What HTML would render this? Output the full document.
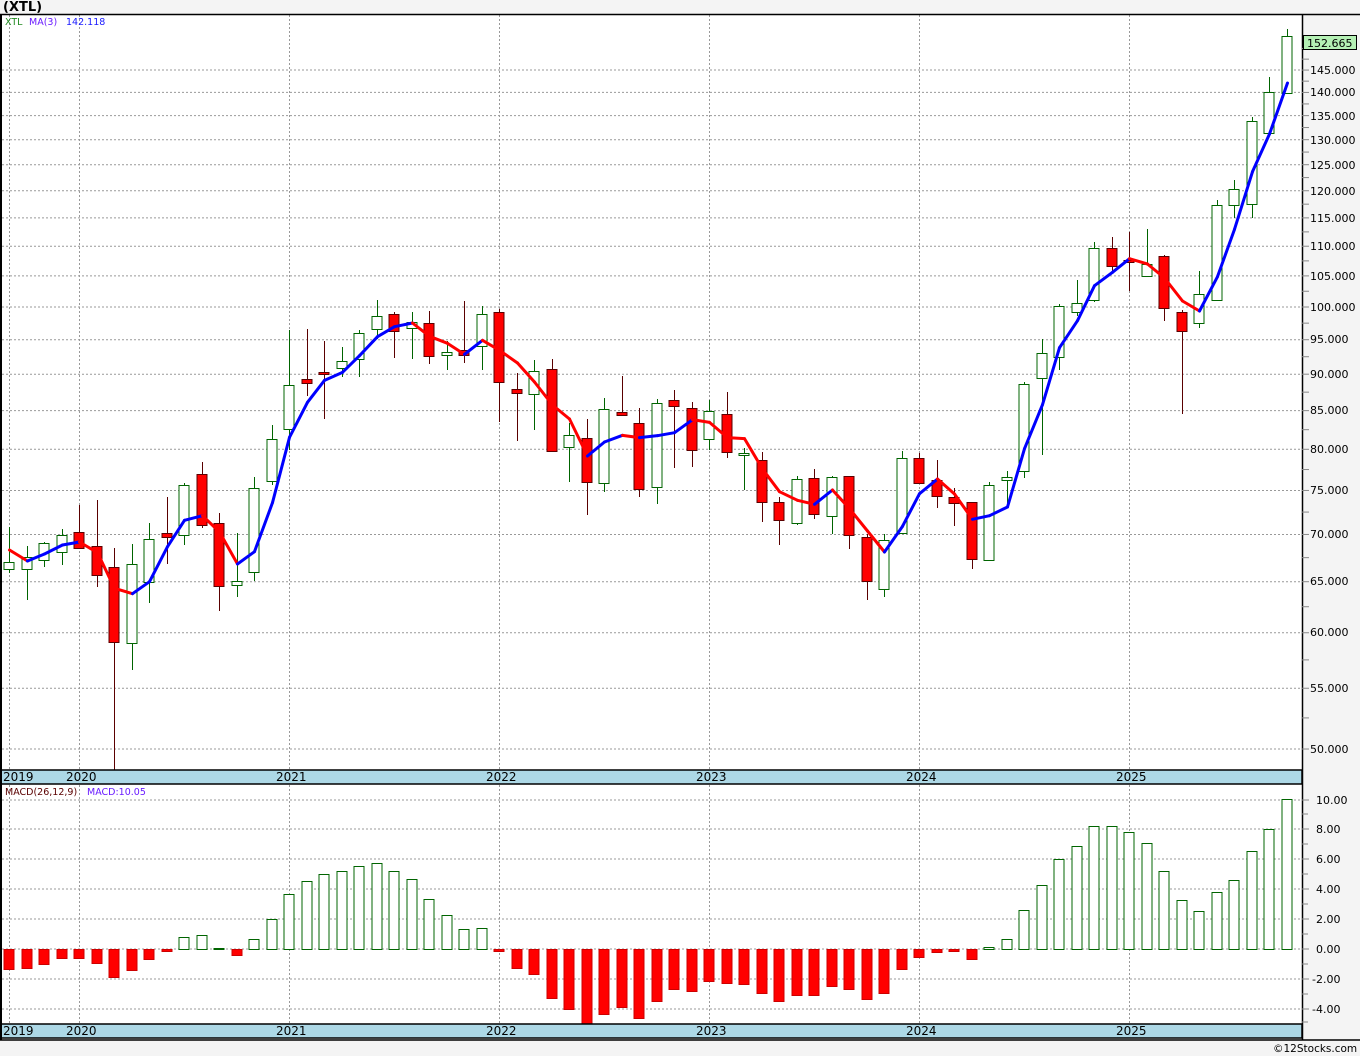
<!DOCTYPE html>
<html><head><meta charset="utf-8"><style>
html,body{margin:0;padding:0;background:#f4f4f4;}
svg{display:block;font-family:"DejaVu Sans","Liberation Sans",sans-serif;}
</style></head><body>
<svg id="s" width="1360" height="1056" viewBox="0 0 1360 1056" xmlns="http://www.w3.org/2000/svg">
<rect x="0" y="0" width="1360" height="1056" fill="#f4f4f4"/>
<rect x="1" y="14" width="1301" height="1026" fill="#fff"/>
<g id="grid"></g>
<g id="cand"></g>
<g id="ma"></g>
<g id="macd"></g>
<rect x="1" y="770" width="1301" height="14" fill="#add8e6" stroke="#000" stroke-width="1.5"/>
<rect x="1" y="1024" width="1301" height="14" fill="#add8e6" stroke="#000" stroke-width="1.5"/>
<g font-size="12" fill="#000">
<text x="3" y="781">2019</text><text x="66" y="781">2020</text><text x="276" y="781">2021</text><text x="486" y="781">2022</text><text x="696" y="781">2023</text><text x="906" y="781">2024</text><text x="1116" y="781">2025</text>
<text x="3" y="1035">2019</text><text x="66" y="1035">2020</text><text x="276" y="1035">2021</text><text x="486" y="1035">2022</text><text x="696" y="1035">2023</text><text x="906" y="1035">2024</text><text x="1116" y="1035">2025</text>
</g>
<line x1="1302.5" y1="14" x2="1302.5" y2="1040" stroke="#000" stroke-width="1.5"/>
<line x1="0" y1="14.5" x2="1360" y2="14.5" stroke="#000" stroke-width="1.5"/>
<line x1="1" y1="14" x2="1" y2="1040" stroke="#000" stroke-width="2"/>
<line x1="0" y1="1040" x2="1360" y2="1040" stroke="#000" stroke-width="1.5"/>
<g id="ticks"></g>
<g font-size="11" fill="#000">
<text x="1310" y="753">50.000</text><text x="1310" y="692">55.000</text><text x="1310" y="636">60.000</text><text x="1310" y="585">65.000</text><text x="1310" y="538">70.000</text><text x="1310" y="494">75.000</text><text x="1310" y="453">80.000</text><text x="1310" y="414">85.000</text><text x="1310" y="378">90.000</text><text x="1310" y="343">95.000</text><text x="1310" y="311">100.000</text><text x="1310" y="280">105.000</text><text x="1310" y="250">110.000</text><text x="1310" y="222">115.000</text><text x="1310" y="195">120.000</text><text x="1310" y="169">125.000</text><text x="1310" y="144">130.000</text><text x="1310" y="120">135.000</text><text x="1310" y="96">140.000</text><text x="1310" y="74">145.000</text>
<text x="1316" y="804">10.00</text><text x="1316" y="833">8.00</text><text x="1316" y="863">6.00</text><text x="1316" y="893">4.00</text><text x="1316" y="923">2.00</text><text x="1316" y="953">0.00</text><text x="1312" y="983">-2.00</text><text x="1312" y="1013">-4.00</text>
</g>
<rect x="1303.5" y="35.5" width="53" height="14" fill="#b4f0b4" stroke="#000"/>
<text x="1307" y="47" font-size="11" fill="#000">152.665</text>
<text x="3" y="11" font-size="13" font-weight="bold" fill="#000">(XTL)</text>
<text x="5" y="25" font-size="9.5" fill="#228b22">XTL</text>
<text x="29" y="25" font-size="9.5" fill="#6a1bff">MA(3)</text>
<text x="66" y="25" font-size="9.5" fill="#1a1aff">142.118</text>
<text x="5" y="795" font-size="9.5" fill="#5a0000">MACD(26,12,9)</text>
<text x="87" y="795" font-size="9.5" fill="#6a1bff">MACD:10.05</text>
<text x="1273" y="1052" font-size="10.5" fill="#000">©12Stocks.com</text>
</svg>
<script>
var NS="http://www.w3.org/2000/svg";
function el(p,t,a){var e=document.createElementNS(NS,t);for(var k in a)e.setAttribute(k,a[k]);p.appendChild(e);return e;}
var grid=document.getElementById('grid'),ticks=document.getElementById('ticks');
function y(p){return 307-637.7*Math.log(p/100);}
for(var p=50;p<=150;p+=2.5){var yy=y(p);
 if(p%5==0 && p<150) el(grid,'line',{x1:2,x2:1302,y1:yy,y2:yy,stroke:'#999','stroke-dasharray':'2,2','stroke-width':1});
 if(yy>16) el(ticks,'line',{x1:1302,x2:1309,y1:yy,y2:yy,stroke:'#888','stroke-width':1});}
[800,829,859,889,919,949,979,1009].forEach(function(v){el(grid,'line',{x1:2,x2:1302,y1:v,y2:v,stroke:'#999','stroke-dasharray':'2,2'});el(ticks,'line',{x1:1302,x2:1309,y1:v,y2:v,stroke:'#888'});});
[814,844,874,904,934,964,994,1022].forEach(function(v){el(ticks,'line',{x1:1302,x2:1308,y1:v,y2:v,stroke:'#888'});});
[9,79,289,499,709,919,1129].forEach(function(x){el(grid,'line',{x1:x+.5,x2:x+.5,y1:15,y2:770,stroke:'#999','stroke-dasharray':'2,2'});el(grid,'line',{x1:x+.5,x2:x+.5,y1:785,y2:1024,stroke:'#999','stroke-dasharray':'2,2'});});
var C=[[527,562,569,573,1],[546,557,569,600,1],[542,543,560,567,1],[529,535,552,565,1],[505,532,548,548,0],[500,546,575,587,0],[548,567,642,770,0],[544,564,643,670,1],[523,539,582,603,1],[497,533,537,564,0],[483,485,535,545,1],[462,474,525,528,0],[513,523,586,611,0],[533,581,585,597,1],[477,488,572,581,1],[425,439,481,485,1],[330,385,429,450,1],[329,379,383,396,0],[341,372,373,419,0],[347,361,368,377,1],[330,333,359,377,1],[300,316,329,339,1],[312,314,331,358,0],[312,322,328,359,1],[311,323,356,364,0],[341,352,355,370,1],[301,350,355,363,0],[306,314,346,370,1],[309,312,382,422,0],[373,389,393,441,0],[360,371,394,430,1],[359,369,451,451,0],[423,435,447,482,1],[419,438,482,515,0],[398,409,483,492,1],[376,412,415,415,0],[408,423,489,497,0],[399,403,487,504,1],[390,400,406,468,0],[402,408,450,467,0],[400,411,439,450,1],[392,414,452,458,0],[448,453,455,490,1],[452,460,502,522,0],[497,502,520,545,0],[476,479,523,525,1],[469,478,514,519,0],[476,477,516,534,1],[476,476,535,549,0],[534,537,581,600,0],[534,540,589,597,1],[451,458,533,533,1],[453,458,483,483,0],[460,480,496,508,0],[488,497,503,526,0],[502,502,559,569,0],[482,485,560,560,1],[471,477,480,505,1],[382,384,471,478,1],[339,353,378,455,1],[304,306,357,370,1],[280,303,312,316,1],[242,248,300,302,1],[237,248,266,272,0],[232,260,262,291,0],[229,264,276,276,1],[255,256,308,321,0],[310,312,331,414,0],[271,294,323,328,1],[200,205,300,300,1],[180,189,205,218,1],[117,121,204,218,1],[77,92,133,133,1],[29,36,93,93,1]];
var cand=document.getElementById('cand');
var X=function(i){return Math.round(9.3+17.5*i);};
C.forEach(function(c,i){var x=X(i);var up=c[4];var col=up?'#006400':'#5a0000';
 el(cand,'line',{x1:x+.5,x2:x+.5,y1:c[0],y2:c[3],stroke:col,'stroke-width':1});
 var h=Math.max(c[2]-c[1],2);
 el(cand,'rect',{x:x-5,y:c[1]+.5,width:10,height:h,fill:up?'#fff':'#ff0000',stroke:col,'stroke-width':1});
});
var cl=C.map(function(c){return c[4]?c[1]:c[2];});
var ma=[];var pre=[552,545];
for(var i=0;i<C.length;i++){var a=i>=2?cl[i-2]:pre[i];var b=i>=1?cl[i-1]:pre[1];ma.push((a+b+cl[i])/3);}
ma[0]=550;ma[1]=561;
var mg=document.getElementById('ma');
for(var i=1;i<ma.length;i++){el(mg,'line',{x1:X(i-1)+.5,y1:ma[i-1],x2:X(i)+.5,y2:ma[i],stroke:ma[i]<ma[i-1]?'#0000ff':'#ff0000','stroke-width':3,'stroke-linecap':'round'});}
var M=[969,968,964,958,958,963,977,970,959,951,937,935,948,955,939,919,894,881,874,871,866,863,871,879,899,915,929,928,951,968,974,998,1009,1024,1014,1007,1018,1001,989,991,981,983,984,993,1001,995,995,986,989,999,993,969,957,952,951,959,947,939,910,885,859,846,826,826,832,843,871,900,911,892,880,851,829,799];
var mm=document.getElementById('macd');
M.forEach(function(v,i){var x=X(i);var pos=v<949;
 el(mm,'rect',{x:x-5,y:(pos?v:949)+.5,width:10,height:Math.max(Math.abs(v-949),1),fill:pos?'#fff':'#ff0000',stroke:pos?'#006400':'#cc0000','stroke-width':1});});
</script>
</body></html>
